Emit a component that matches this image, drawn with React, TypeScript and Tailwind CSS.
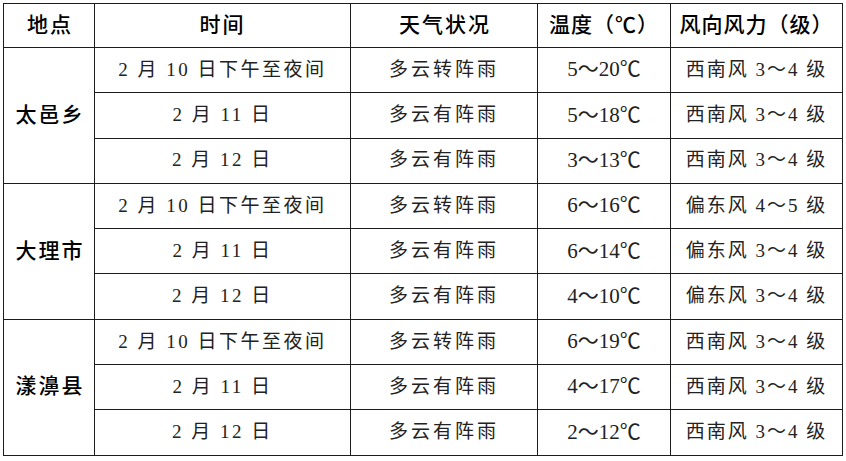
import React from 'react'

const font = "font-['Liberation_Serif','Noto_Sans_CJK_SC',serif]"

const groups = [
  {
    place: '太邑乡',
    rows: [
      ['2 月 10 日下午至夜间', '多云转阵雨', '5～20℃', '西南风 3～4 级'],
      ['2 月 11 日', '多云有阵雨', '5～18℃', '西南风 3～4 级'],
      ['2 月 12 日', '多云有阵雨', '3～13℃', '西南风 3～4 级'],
    ],
  },
  {
    place: '大理市',
    rows: [
      ['2 月 10 日下午至夜间', '多云转阵雨', '6～16℃', '偏东风 4～5 级'],
      ['2 月 11 日', '多云有阵雨', '6～14℃', '偏东风 3～4 级'],
      ['2 月 12 日', '多云有阵雨', '4～10℃', '偏东风 3～4 级'],
    ],
  },
  {
    place: '漾濞县',
    rows: [
      ['2 月 10 日下午至夜间', '多云转阵雨', '6～19℃', '西南风 3～4 级'],
      ['2 月 11 日', '多云有阵雨', '4～17℃', '西南风 3～4 级'],
      ['2 月 12 日', '多云有阵雨', '2～12℃', '西南风 3～4 级'],
    ],
  },
]

const cell = 'border-[1.5px] border-[#1c1c1c] text-center align-middle p-0'

export default function App() {
  return (
    <div className={`w-[846px] h-[461px] bg-white pt-[3px] pl-[3px] ${font}`}>
      <table className="border-collapse table-fixed w-[839px]">
        <colgroup>
          <col className="w-[91px]" />
          <col className="w-[256px]" />
          <col className="w-[187px]" />
          <col className="w-[133px]" />
          <col className="w-[172px]" />
        </colgroup>
        <thead>
          <tr className="h-[44px] text-[21px] text-black">
            <th className={`${cell} font-medium tracking-[2px] indent-[2px]`}>地点</th>
            <th className={`${cell} font-medium tracking-[2px]`}>时间</th>
            <th className={`${cell} font-medium tracking-[2px] indent-[2px]`}>天气状况</th>
            <th className={`${cell} font-medium tracking-[1px]`}>温度（℃）</th>
            <th className={`${cell} font-medium tracking-[1px]`}>风向风力（级）</th>
          </tr>
        </thead>
        <tbody>
          {groups.map((g) =>
            g.rows.map((r, i) => (
              <tr key={g.place + i} className="h-[45.3px] text-[19px] text-[#222]">
                {i === 0 && (
                  <td rowSpan={3} className={`${cell} text-[21px] font-medium text-black tracking-[2px] indent-[2px]`}>
                    {g.place}
                  </td>
                )}
                <td className={`${cell} tracking-[2.5px]`}>{r[0]}</td>
                <td className={`${cell} tracking-[3px]`}>{r[1]}</td>
                <td className={`${cell} text-[21px]`}>{r[2]}</td>
                <td className={`${cell} tracking-[2px]`}>{r[3]}</td>
              </tr>
            ))
          )}
        </tbody>
      </table>
    </div>
  )
}
